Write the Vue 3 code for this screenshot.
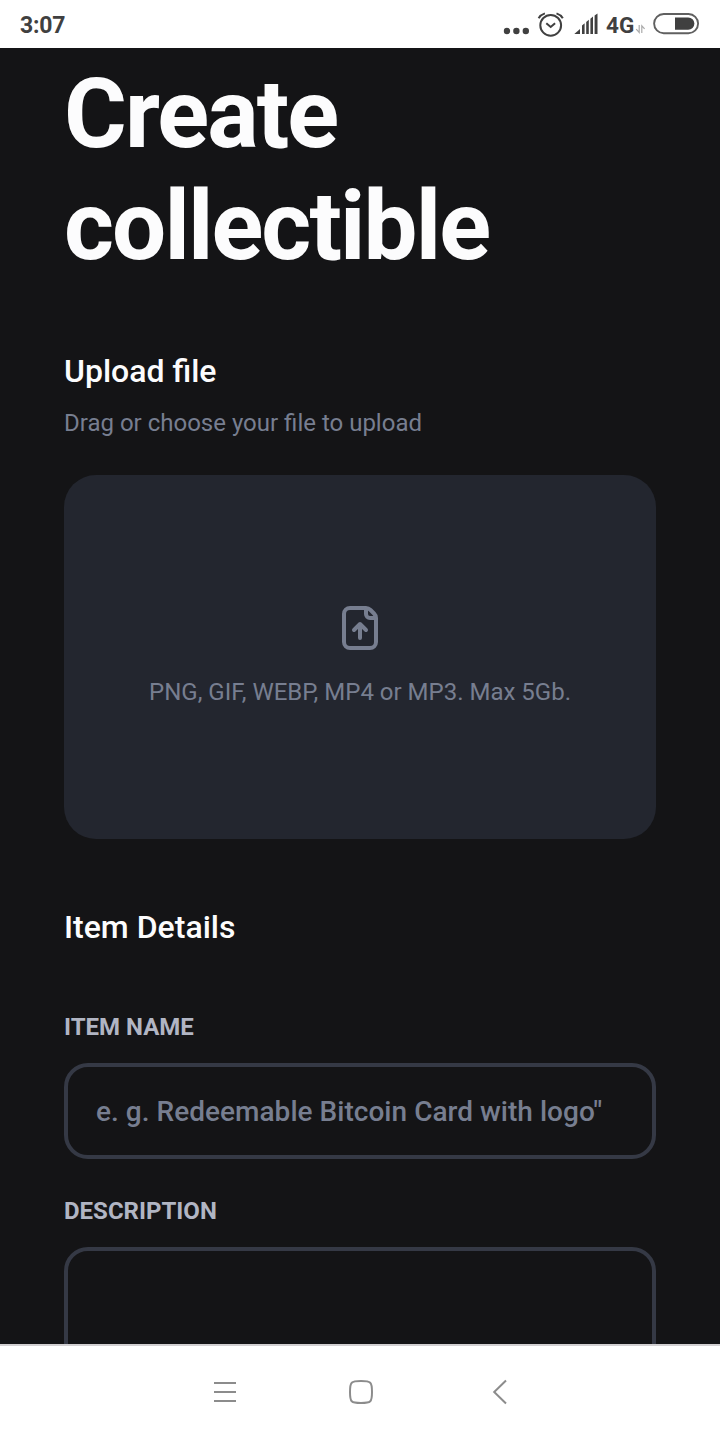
<template>
  <div class="screen">
    <header class="status-bar">
      <span class="clock">3:07</span>
      <svg class="status-icons" width="202" height="48" viewBox="0 0 202 48">
        <g fill="#404040">
          <circle cx="7" cy="31" r="3.2" />
          <circle cx="16.4" cy="31" r="3.2" />
          <circle cx="25.8" cy="31" r="3.2" />
        </g>
        <!-- alarm -->
        <g fill="none" stroke="#404040" stroke-width="2">
          <circle cx="50.7" cy="25.3" r="10.4" />
          <path d="M46.3 23.2l4.4 3.8 4.4-3.8" />
          <path d="M38.6 18.2q2-3.4 6.3-4.8M62.8 18.2q-2-3.4-6.3-4.8" />
        </g>
        <!-- signal -->
        <g fill="#404040">
          <path d="M74.3 34l5.7-5V34z" />
          <path d="M82 25.4l2.6-2.2V34H82z" />
          <path d="M86.2 22l2.6-2.2V34h-2.6z" />
          <path d="M90.4 18.8l2.6-2.2V34h-2.6z" />
          <path d="M94.6 15.6l2.9-2.2V34h-2.9z" />
        </g>
        <text class="network" x="106" y="33.3">4G</text>
        <path d="M139.2 25v7.4l-3-3.2M141.8 33v-7.2l2.8 3" fill="none" stroke="#aaa" stroke-width="1.2" />
        <!-- battery -->
        <rect x="154.1" y="14" width="44" height="19.2" rx="9.6" fill="none" stroke="#606060" stroke-width="1.9" />
        <path d="M175 17.4h13.2a6.2 6.2 0 0 1 0 12.4H175z" fill="#404040" />
      </svg>
    </header>

    <main class="page">
      <h1 class="title">Create collectible</h1>

      <section class="upload">
        <h2 class="heading">Upload file</h2>
        <p class="note">Drag or choose your file to upload</p>
        <label class="dropzone">
          <input class="file" type="file">
          <svg width="48" height="48" viewBox="0 0 48 48" fill="none" stroke="#777e90" stroke-width="4">
            <path d="M30 4H14a6 6 0 0 0-6 6v28a6 6 0 0 0 6 6h20a6 6 0 0 0 6-6V14Q40 11.500 38 9.500L34.500 6Q32.500 4 30 4z" />
            <path d="M30 4v6a4 4 0 0 0 4 4h6" />
            <path d="M24 34V22M18 26l6-6 6 6" stroke-linecap="round" stroke-linejoin="round" />
          </svg>
          <span class="formats">PNG, GIF, WEBP, MP4 or MP3. Max 5Gb.</span>
        </label>
      </section>

      <section class="details">
        <h2 class="heading">Item Details</h2>
        <div class="field">
          <label class="label" for="name">Item name</label>
          <input id="name" v-model="name" class="input" type="text" placeholder="e. g. Redeemable Bitcoin Card with logo&quot;">
        </div>
        <div class="field">
          <label class="label" for="description">Description</label>
          <textarea id="description" v-model="description" class="input textarea"></textarea>
        </div>
      </section>
    </main>

    <nav class="nav-bar">
      <svg width="24" height="24" viewBox="0 0 24 24">
        <path d="M1 3h22M1 12h22M1 21h22" />
      </svg>
      <svg width="26" height="26" viewBox="0 0 26 26">
        <path d="M13 2C23 2 24 3 24 13S23 24 13 24 2 23 2 13 3 2 13 2z" />
      </svg>
      <svg width="16" height="26" viewBox="0 0 16 26">
        <path d="M14 1.5L2.2 13 14 24.5" />
      </svg>
    </nav>
  </div>
</template>

<script setup>
import { ref } from 'vue';

const name = ref('');
const description = ref('');
</script>

<style>
body {
  margin: 0;
  background: #141416;
}
</style>

<style scoped>
.screen {
  display: flex;
  flex-direction: column;
  height: 1440px;
  overflow: hidden;
  background: #141416;
  color: #fcfcfd;
  font-family: Roboto, sans-serif;
}

.status-bar {
  flex: none;
  display: flex;
  align-items: center;
  justify-content: space-between;
  height: 48px;
  padding: 0 18px 0 20px;
  background: #fff;
  color: #404040;
}

.clock {
  font-size: 23px;
  font-weight: 700;
  line-height: 44px;
  letter-spacing: -0.2px;
  padding-top: 4px;
}

.network {
  fill: #404040;
  font-size: 22.5px;
  font-weight: 700;
}

.page {
  flex: 1;
  min-height: 0;
  overflow: hidden;
  padding: 10px 64px 0;
}

.title {
  margin: 0 0 65px;
  font-size: 96px;
  font-weight: 700;
  line-height: 112px;
  letter-spacing: -0.0198em;
}

.heading {
  margin: 0;
  font-size: 32px;
  font-weight: 500;
  line-height: 48px;
}

.note {
  margin: 8px 0 32px;
  color: #777e90;
  font-size: 24px;
  line-height: 40px;
}

.dropzone {
  display: flex;
  flex-direction: column;
  align-items: center;
  box-sizing: border-box;
  height: 364px;
  padding-top: 129px;
  border-radius: 32px;
  background: #23262f;
  color: #777e90;
}

.file {
  display: none;
}

.formats {
  margin-top: 20px;
  font-size: 24px;
  line-height: 40px;
}

.details {
  margin-top: 64px;
}

.details .heading {
  margin-bottom: 64px;
}

.field {
  margin-bottom: 40px;
}

.label {
  display: block;
  margin-bottom: 24px;
  color: #b1b5c3;
  font-size: 24px;
  font-weight: 700;
  line-height: 24px;
  text-transform: uppercase;
}

.input {
  display: block;
  box-sizing: border-box;
  width: 100%;
  height: 96px;
  padding: 0 28px;
  border: 4px solid #353945;
  border-radius: 24px;
  outline: none;
  background: none;
  color: #fcfcfd;
  font-family: inherit;
  font-size: 28px;
  font-weight: 500;
  letter-spacing: 0.03px;
}

.input::placeholder {
  color: #777e90;
  opacity: 1;
}

.textarea {
  height: 200px;
  padding: 24px 28px;
  resize: none;
}

.nav-bar {
  flex: none;
  display: flex;
  align-items: center;
  gap: 111px;
  box-sizing: border-box;
  height: 96px;
  padding: 0 0 2px 213px;
  border-top: 2px solid #d2d0d2;
  background: #fff;
}

.nav-bar svg {
  fill: none;
  stroke: #8c8c8c;
  stroke-width: 2;
}

.nav-bar svg:last-child {
  margin-left: 6.5px;
}
</style>
